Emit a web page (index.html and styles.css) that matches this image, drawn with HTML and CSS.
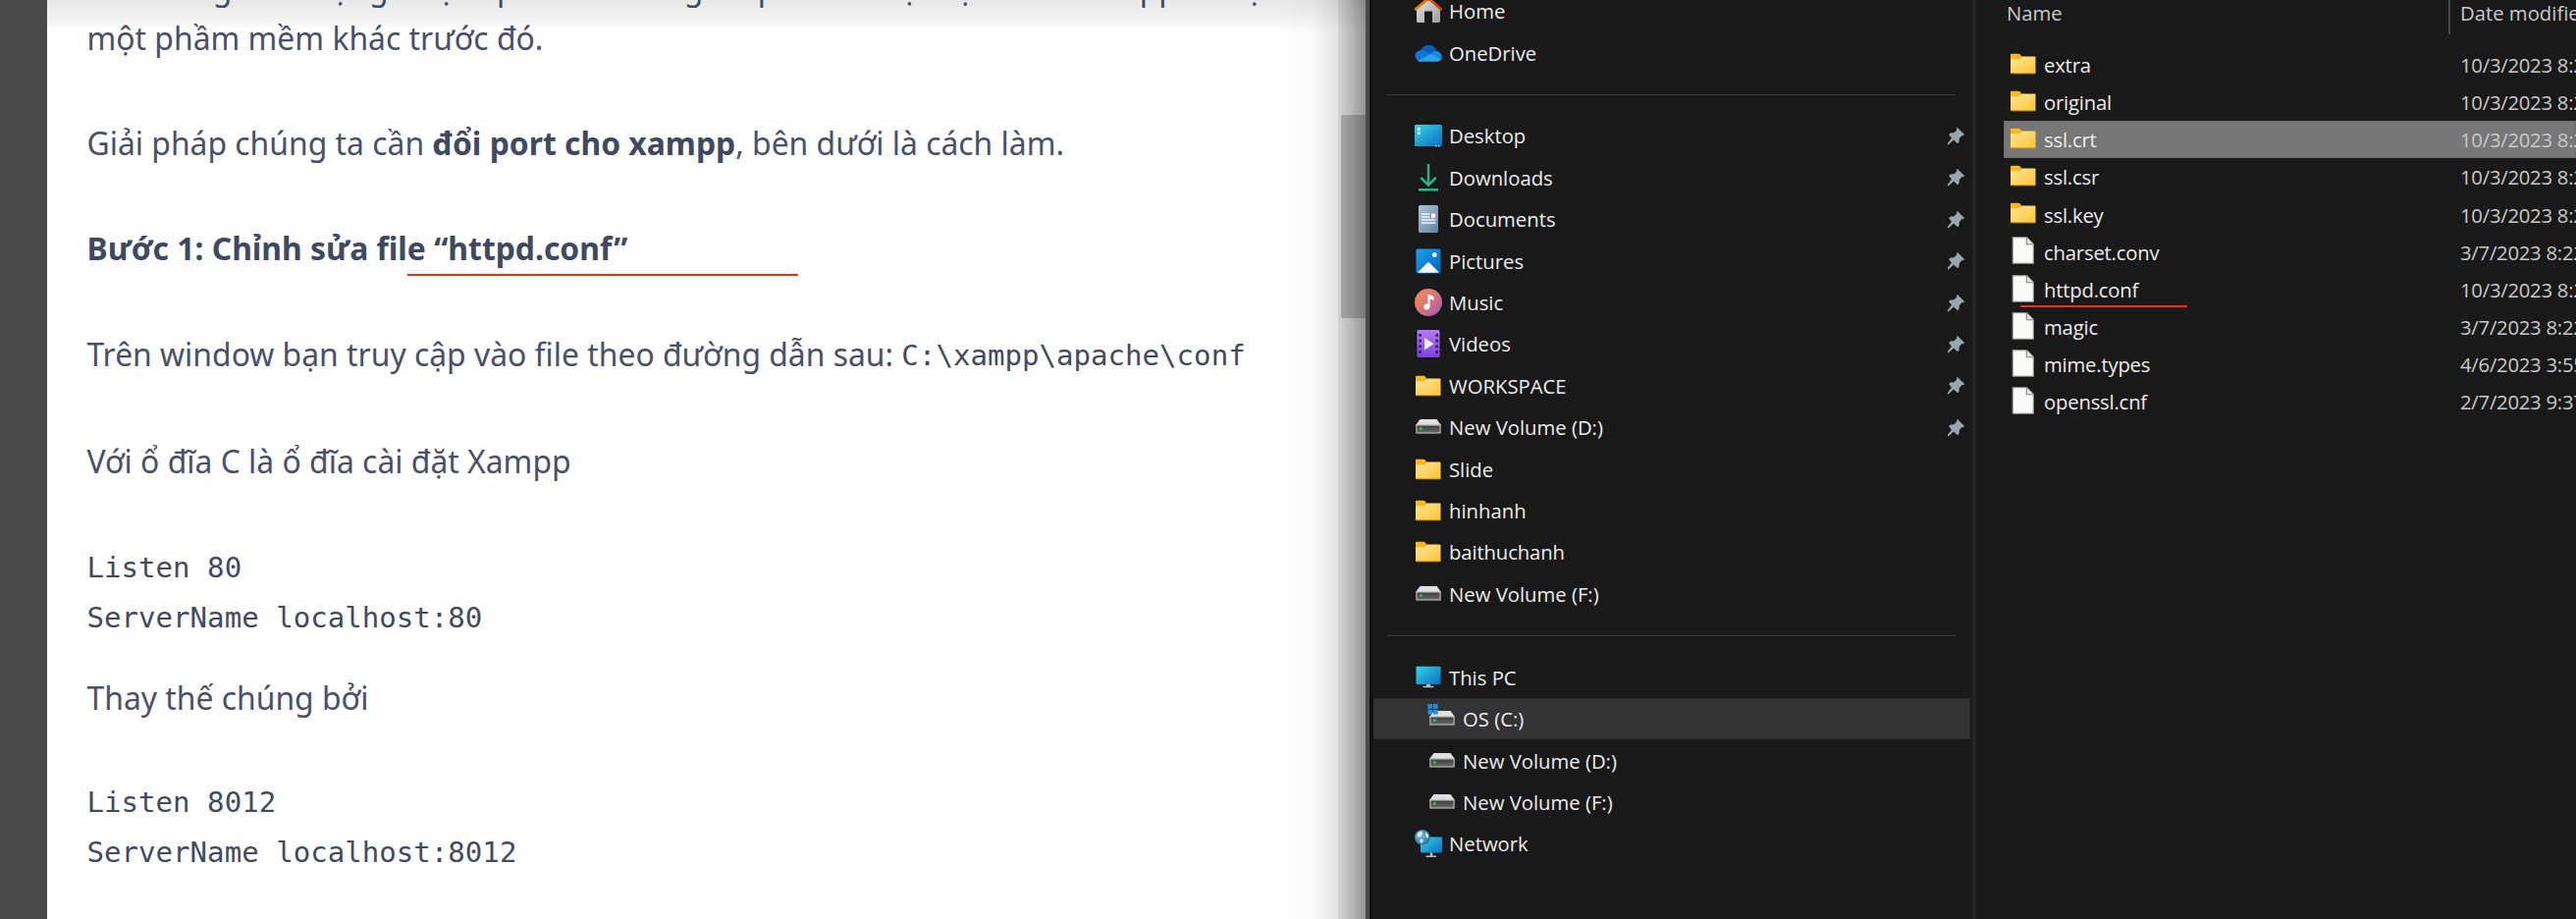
FILE: index.html
```html
<!DOCTYPE html>
<html lang="vi">
<head>
<meta charset="utf-8">
<title>Đổi port cho xampp</title>
<link rel="stylesheet" href="styles.css">
</head>
<body>
<svg class="defs" aria-hidden="true">
  <defs>
    <linearGradient id="gFolder" x1="0" y1="0" x2="1" y2="1"><stop offset="0" stop-color="#ffe59a"/><stop offset="1" stop-color="#fcc533"/></linearGradient>
    <linearGradient id="gScreen" x1="0" y1="0" x2="1" y2="1"><stop offset="0" stop-color="#35d6e4"/><stop offset="1" stop-color="#0b6cc4"/></linearGradient>
    <linearGradient id="gHome" x1="0" y1="0" x2="1" y2="1"><stop offset="0" stop-color="#e4e4e4"/><stop offset="1" stop-color="#9d9d9d"/></linearGradient>
    <linearGradient id="gRoof" x1="0" y1="0" x2="1" y2="0"><stop offset="0" stop-color="#f08a16"/><stop offset="1" stop-color="#cf4410"/></linearGradient>
    <linearGradient id="gDown" x1="0" y1="0" x2="1" y2="1"><stop offset="0" stop-color="#36c477"/><stop offset="1" stop-color="#12a89e"/></linearGradient>
    <linearGradient id="gDoc" x1="0" y1="0" x2="1" y2="1"><stop offset="0" stop-color="#b3c6d9"/><stop offset="1" stop-color="#62809f"/></linearGradient>
    <linearGradient id="gPic" x1="0" y1="0" x2="1" y2="1"><stop offset="0" stop-color="#1ba0ea"/><stop offset="1" stop-color="#0561b8"/></linearGradient>
    <linearGradient id="gMusic" x1="0" y1="0" x2="1" y2="1"><stop offset="0.1" stop-color="#f28a57"/><stop offset="0.6" stop-color="#cf6d84"/><stop offset="1" stop-color="#965bbf"/></linearGradient>
    <linearGradient id="gVideo" x1="0" y1="0" x2="0" y2="1"><stop offset="0" stop-color="#b27af2"/><stop offset="1" stop-color="#8142dd"/></linearGradient>
    <linearGradient id="gDrive" x1="0" y1="0" x2="0" y2="1"><stop offset="0" stop-color="#3c3c3c"/><stop offset="1" stop-color="#6a6a6a"/></linearGradient>
    <radialGradient id="gGlobe" cx="0.4" cy="0.4" r="0.7"><stop offset="0" stop-color="#7cc0e6"/><stop offset="1" stop-color="#24648f"/></radialGradient>
  </defs>
  <symbol id="home" viewBox="0 0 28 28">
    <path d="M2 13 14 2l12 11v11.500a1.500 1.500 0 0 1-1.500 1.500H18V14.500h-8V26H3.500A1.500 1.500 0 0 1 2 24.500z" fill="url(#gHome)"/>
    <path d="M1.300 12.300 14 1.300l12.700 11" fill="none" stroke="url(#gRoof)" stroke-width="2.700" stroke-linecap="round" stroke-linejoin="round"/>
  </symbol>
  <symbol id="onedrive" viewBox="0 0 28 28">
    <path d="M6 12a8.500 8.500 0 0 1 16.300-.5L17 16z" fill="#0a5cb8"/>
    <path d="M4.500 22.500C-1 20-1 12 6 11.300c3-.5 5 .3 7 1.700l6 3.500-12 6.300z" fill="#0f76d4"/>
    <path d="M17 15.500c2-4 6-4.500 8-2.500 3 2 3.500 6 1.500 8.500L19 20z" fill="#178ae0"/>
    <path d="M3 22 17 14.800l9.800 5.700c-.8 1.500-2.300 2.300-4 2.300H6.500C5 22.800 4 22.600 3 22z" fill="#28a5ed"/>
  </symbol>
  <symbol id="desktop" viewBox="0 0 28 28">
    <rect x="0" y="3" width="28" height="22" rx="1.500" fill="url(#gScreen)"/>
    <path d="M3 6h2.700v2.700H3zM3 10.200h2.700v2.700H3z" fill="#fff"/>
    <path d="M21 24h1.500v1.500H21zM24 24h1.500v1.500H24z" fill="#b9d4e8"/>
  </symbol>
  <symbol id="downloads" viewBox="0 0 28 28">
    <path d="M14 0v21M6.300 14 14 21.500 21.700 14" fill="none" stroke="#28b784" stroke-width="2.500"/>
    <rect x="4" y="25" width="20" height="2.600" fill="url(#gDown)"/>
  </symbol>
  <symbol id="documents" viewBox="0 0 28 28">
    <rect x="4" y="0" width="20" height="28" rx="1.500" fill="url(#gDoc)"/>
    <path d="M7 9h8.500M7 12h8.500M7 15h14.500M7 18h14.500" stroke="#f4f8fc" stroke-width="1.400"/>
    <rect x="17" y="8.500" width="4.300" height="4.300" fill="#fff"/>
  </symbol>
  <symbol id="pictures" viewBox="0 0 28 28">
    <rect x="1.500" y="1.500" width="25" height="25" rx="1.500" fill="url(#gPic)"/>
    <path d="M3.500 25 12.500 16q1.500-1.400 3 0l9 9q-.5 .8-1.500 .8H5q-1 0-1.500-.8z" fill="#f1f7fd"/>
    <circle cx="20.300" cy="7.700" r="2.400" fill="#fff"/>
  </symbol>
  <symbol id="music" viewBox="0 0 28 28">
    <circle cx="14" cy="14" r="14" fill="url(#gMusic)"/>
    <circle cx="12.300" cy="18.500" r="3" fill="#fff"/>
    <path d="M13.500 18.500V6h1.500l4.500 2v4l-4-1.700v8.200z" fill="#fff"/>
  </symbol>
  <symbol id="videos" viewBox="0 0 28 28">
    <rect x="2.500" y="0" width="23" height="28" rx="1.500" fill="url(#gVideo)"/>
    <path d="M5.600 4v22M22.600 4v22" stroke="#3b1d78" stroke-width="2.800" stroke-dasharray="2.800 2.900"/>
    <path d="M10 8v12.500l9.500-6.200z" fill="#f0eef5"/>
  </symbol>
  <symbol id="folder" viewBox="0 0 28 28">
    <path d="M1 5q0-1 1-1h7q1 0 1.600 .8L12 6.500h-1V10H1z" fill="#f5b21c"/>
    <path d="M1 9.200h9L12 6.500h13.500q1 0 1 1v15.300q0 1-1 1H2q-1 0-1-1z" fill="url(#gFolder)"/>
    <path d="M1 9V4.700q0-.9 1-.9h7q1 0 1.600 .8L12 6.300 9.800 9z" fill="#fab71e"/>
    <path d="M1 22.800q0 1 1 1h23.500q1 0 1-1" fill="none" stroke="#d99a1c" stroke-width="1"/>
  </symbol>
  <symbol id="drive" viewBox="0 0 28 28">
    <path d="M5.500 6h17l4 5.500v2h-25v-2z" fill="#dfe0e2"/>
    <rect x="1.900" y="12" width="24.200" height="8" fill="url(#gDrive)" stroke="#b4b4b4" stroke-width="1.200"/>
    <circle cx="6.300" cy="15.600" r="1.500" fill="#39c443"/>
  </symbol>
  <symbol id="osdrive" viewBox="0 0 28 28" overflow="visible">
    <use href="#drive" width="28" height="28"/>
    <path d="M-.7-1h4.700v4.700h-4.700zM5-1h4.700v4.700H5zM-.7 4.700h4.700v4.700h-4.700zM5 4.700h4.700v4.700H5z" fill="#1b8fe0"/>
  </symbol>
  <symbol id="thispc" viewBox="0 0 28 28">
    <rect x="1.500" y="2.700" width="25" height="18.300" rx=".8" fill="url(#gScreen)"/>
    <path d="M12 21h4v1.700h3.500v1.500h-11v-1.500H12z" fill="#b8bec4"/>
  </symbol>
  <symbol id="network" viewBox="0 0 28 28">
    <rect x="6" y="7.500" width="22" height="16" rx=".8" fill="url(#gScreen)"/>
    <path d="M15.700 23.500h2.600v3H22v1.500H11.500v-1.500h4.200z" fill="#b8bec4"/>
    <circle cx="7.800" cy="7.800" r="7.800" fill="url(#gGlobe)"/>
    <path d="M3 3.500 7 1.500l1.500 2.500L5 7.500 2.500 7zM11 2.500l3 2.500v3.500l-2.500-1zM6 9.500l3 1-1.500 3.500-2.500-2z" fill="#d9edf7"/>
  </symbol>
  <symbol id="pin" viewBox="0 0 20 20">
    <path d="M11.500 1 19 8.300l-1.300 1.400-1.200-.3-3 3.200-.3 4-1.700 1.500-4-4L2 19.300 .8 19.200 .9 18l4.300-5.600-3-4L4 6.800l3.900-.1L11 3.300 10.400 2z" fill="#9aa5ad"/>
  </symbol>
  <symbol id="file" viewBox="0 0 28 28">
    <path d="M3.200 .6h14.300l6.900 7v19.700H3.200z" fill="#fafafa" stroke="#8b8b85" stroke-width="1.100"/>
    <path d="M17.300 .8v7h7" fill="#e4e4e4" stroke="#85857f" stroke-width="1.100"/>
  </symbol>
</svg>

<main class="screen">
  <section class="browser">
    <article class="page">
      <p>Lỗi không khởi động được apache thường do port 80 mặc định của xampp đã bị<br>một phầm mềm khác trước đó.</p>
      <p>Giải pháp chúng ta cần <strong>đổi port cho xampp</strong>, bên dưới là cách làm.</p>
      <p class="step"><strong>Bước 1: Chỉnh sửa file “httpd.conf”</strong></p>
      <p class="path">Trên window bạn truy cập vào file theo đường dẫn sau: <code>C:\xampp\apache\conf</code></p>
      <p class="lead">Với ổ đĩa C là ổ đĩa cài đặt Xampp</p>
      <pre>Listen 80
ServerName localhost:80</pre>
      <p>Thay thế chúng bởi</p>
      <pre>Listen 8012
ServerName localhost:8012</pre>
    </article>
    <div class="scrollbar"><div class="thumb"></div></div>
    <div class="shade-top"></div>
    <div class="shade-right"></div>
  </section>

  <section class="explorer">
    <nav class="sidebar">
      <div class="item"><svg><use href="#home"/></svg><span>Home</span></div>
      <div class="item"><svg><use href="#onedrive"/></svg><span>OneDrive</span></div>
      <div class="rule"></div>
      <div class="item"><svg><use href="#desktop"/></svg><span>Desktop</span><svg class="pin"><use href="#pin"/></svg></div>
      <div class="item"><svg><use href="#downloads"/></svg><span>Downloads</span><svg class="pin"><use href="#pin"/></svg></div>
      <div class="item"><svg><use href="#documents"/></svg><span>Documents</span><svg class="pin"><use href="#pin"/></svg></div>
      <div class="item"><svg><use href="#pictures"/></svg><span>Pictures</span><svg class="pin"><use href="#pin"/></svg></div>
      <div class="item"><svg><use href="#music"/></svg><span>Music</span><svg class="pin"><use href="#pin"/></svg></div>
      <div class="item"><svg><use href="#videos"/></svg><span>Videos</span><svg class="pin"><use href="#pin"/></svg></div>
      <div class="item"><svg><use href="#folder"/></svg><span>WORKSPACE</span><svg class="pin"><use href="#pin"/></svg></div>
      <div class="item"><svg><use href="#drive"/></svg><span>New Volume (D:)</span><svg class="pin"><use href="#pin"/></svg></div>
      <div class="item"><svg><use href="#folder"/></svg><span>Slide</span></div>
      <div class="item"><svg><use href="#folder"/></svg><span>hinhanh</span></div>
      <div class="item"><svg><use href="#folder"/></svg><span class="tight">baithuchanh</span></div>
      <div class="item"><svg><use href="#drive"/></svg><span>New Volume (F:)</span></div>
      <div class="rule"></div>
      <div class="item"><svg><use href="#thispc"/></svg><span>This PC</span></div>
      <div class="item child current"><svg><use href="#osdrive"/></svg><span>OS (C:)</span></div>
      <div class="item child"><svg><use href="#drive"/></svg><span>New Volume (D:)</span></div>
      <div class="item child"><svg><use href="#drive"/></svg><span>New Volume (F:)</span></div>
      <div class="item"><svg><use href="#network"/></svg><span>Network</span></div>
    </nav>
    <div class="files">
      <div class="head"><span class="name">Name</span><span class="date">Date modified</span></div>
      <div class="row"><svg><use href="#folder"/></svg><span class="name">extra</span><span class="date">10/3/2023 8:22 AM</span></div>
      <div class="row"><svg><use href="#folder"/></svg><span class="name">original</span><span class="date">10/3/2023 8:22 AM</span></div>
      <div class="row selected"><svg><use href="#folder"/></svg><span class="name">ssl.crt</span><span class="date">10/3/2023 8:22 AM</span></div>
      <div class="row"><svg><use href="#folder"/></svg><span class="name">ssl.csr</span><span class="date">10/3/2023 8:22 AM</span></div>
      <div class="row"><svg><use href="#folder"/></svg><span class="name">ssl.key</span><span class="date">10/3/2023 8:22 AM</span></div>
      <div class="row"><svg><use href="#file"/></svg><span class="name">charset.conv</span><span class="date">3/7/2023 8:22 PM</span></div>
      <div class="row marked"><svg><use href="#file"/></svg><span class="name">httpd.conf</span><span class="date">10/3/2023 8:22 AM</span></div>
      <div class="row"><svg><use href="#file"/></svg><span class="name">magic</span><span class="date">3/7/2023 8:22 PM</span></div>
      <div class="row"><svg><use href="#file"/></svg><span class="name">mime.types</span><span class="date">4/6/2023 3:55 PM</span></div>
      <div class="row"><svg><use href="#file"/></svg><span class="name">openssl.cnf</span><span class="date">2/7/2023 9:37 PM</span></div>
    </div>
  </section>
</main>
</body>
</html>
```
FILE: styles.css
```css
* { box-sizing: border-box; }
body { margin: 0; background: #191919; overflow: hidden; }
.defs { position: absolute; width: 0; height: 0; }
.screen { display: flex; width: 2624px; height: 936px; overflow: hidden; }

/* Browser window */
.browser {
  position: relative;
  display: flex;
  flex: none;
  width: 1395px;
  height: 936px;
  overflow: hidden;
  background: #fefefe;
  border-left: 48px solid #4a4a4a;
  border-right: 4px solid #4b4b4b;
}
.page {
  flex: none;
  width: 1315px;
  margin-top: -38px;
  padding-left: 40.5px;
  font: 31.87px/51px "Noto Sans", sans-serif;
  color: #4a5068;
  white-space: nowrap;
}
.page p { margin: 0 0 56px; }
.page strong { font-weight: 700; color: #414961; }
.page code, .page pre {
  font-family: "DejaVu Sans Mono", monospace;
  font-size: 29.1px;
  color: #434a60;
}
.page code { position: relative; top: -1px; line-height: 1; }
.page pre { margin: 0 0 30px; line-height: 51px; }
.page .step { position: relative; margin-bottom: 57px; }
.page .path { height: 51px; margin-bottom: 58px; }
.page .lead { margin-bottom: 58px; }
.step::after {
  content: "";
  position: absolute;
  left: 326px;
  top: 52px;
  width: 398px;
  height: 2px;
  background: #ff2a00;
}
.scrollbar { flex: none; width: 28px; padding: 117px 0 0 3px; background: #f0f0f0; }
.thumb { width: 25px; height: 207px; background: #c0c0c0; }
.shade-top {
  position: absolute;
  inset: 0 0 auto 0;
  height: 33px;
  background: linear-gradient(rgba(0,0,0,.09), rgba(0,0,0,.055) 45%, rgba(0,0,0,0));
}
.shade-right {
  position: absolute;
  inset: 0 0 0 auto;
  width: 90px;
  background: linear-gradient(90deg, rgba(0,0,0,0), rgba(0,0,0,.015) 40%, rgba(0,0,0,.1) 68%, rgba(0,0,0,.2) 80%, rgba(0,0,0,.38));
}

/* File explorer */
.explorer {
  display: flex;
  flex: 1;
  min-width: 0;
  background: #191919;
  border-left: 3px solid #111;
  font: 20.3px/1 "Open Sans", "Noto Sans", sans-serif;
  color: #ececec;
  white-space: nowrap;
}
.sidebar {
  display: flex;
  flex-direction: column;
  flex: none;
  width: 615px;
  height: 936px;
  padding-left: 1px;
  border-right: 4px solid #242424;
  overflow: hidden;
}
.sidebar::before { content: ""; flex: none; height: 0; margin-top: -10px; }
.item {
  display: flex;
  align-items: center;
  flex: none;
  gap: 7px;
  height: 42.42px;
  margin-right: 2px;
  padding: 0 5px 0 42px;
}
.item svg { flex: none; width: 28px; height: 28px; overflow: visible; }
.item .pin { width: 19px; height: 19px; margin-left: auto; }
.item span { line-height: 28px; }
.tight { letter-spacing: -.12px; }
.child { padding-left: 56px; }
.current { background: #333; box-shadow: inset 0 0 0 1px #2c2c2c; }
.rule { flex: none; height: 42.42px; padding: 20.700px 17px 0 14px; }
.rule::before { content: ""; display: block; height: 1.500px; background: #393939; }

.files { flex: 1; min-width: 0; padding-left: 28px; overflow: hidden; }
.head { display: flex; height: 35px; margin-bottom: 12px; padding-left: 3px; color: #c9c9c9; }
.head .name { flex: none; width: 452px; border-right: 2px solid #474747; }
.head span { line-height: 27px; }
.head .date { padding-left: 10px; }
.row { display: flex; align-items: center; height: 38.16px; padding-left: 6px; letter-spacing: -.2px; }
.row svg { flex: none; width: 28px; height: 28px; margin: 0 7px 3px 0; overflow: visible; }
.row .name { flex: none; width: 424px; }
.row .date { color: #c9c9c9; letter-spacing: -.25px; }
.selected { background: #777; box-shadow: inset 0 0 0 1px #6c6c6c; }
.marked { position: relative; }
.marked::after {
  content: "";
  position: absolute;
  left: 17px;
  top: 35px;
  width: 170px;
  height: 2px;
  background: #ff2a00;
}
```
